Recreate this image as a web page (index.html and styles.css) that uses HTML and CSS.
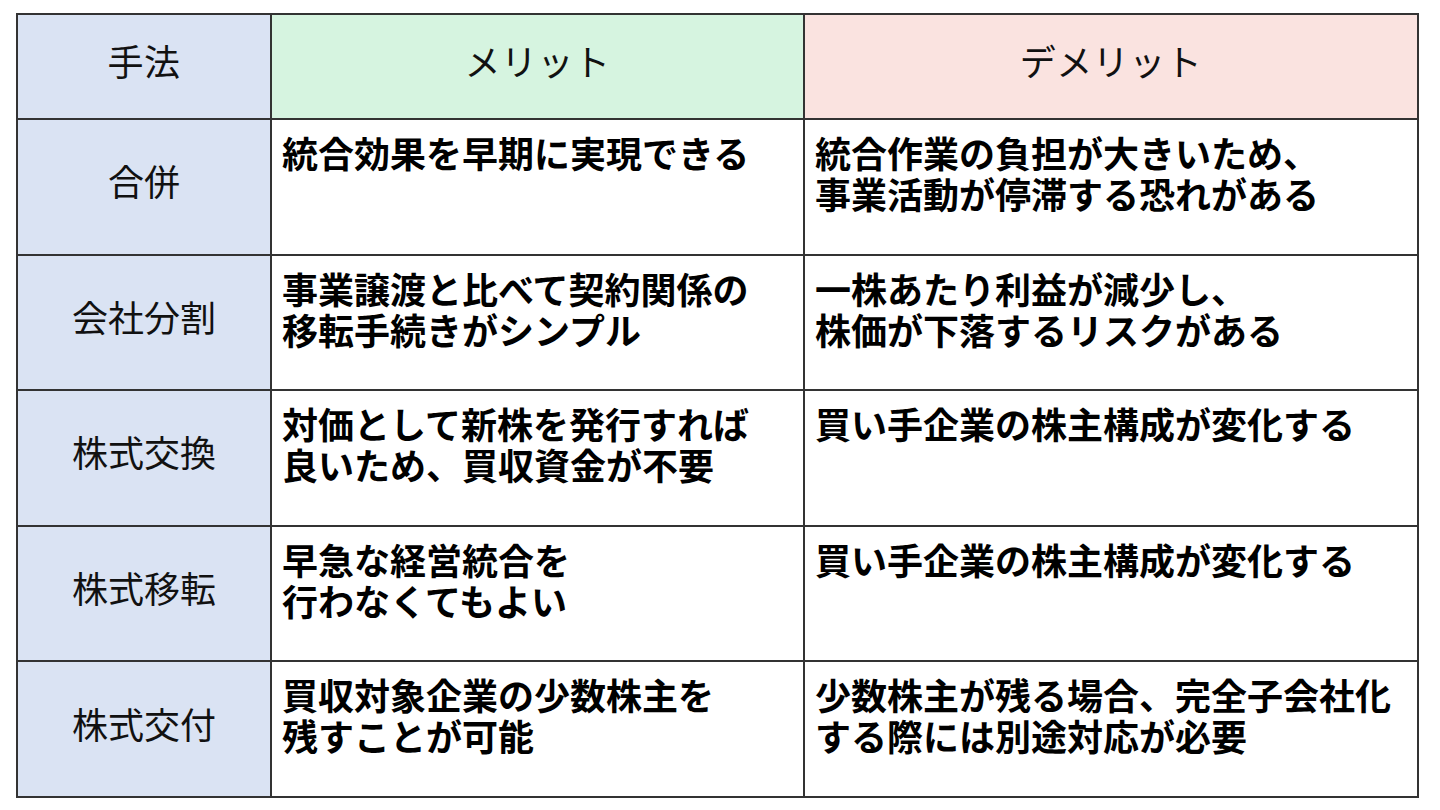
FILE: index.html
```html
<!DOCTYPE html>
<html lang="ja">
<head>
<meta charset="utf-8">
<title>手法比較</title>
<link rel="stylesheet" href="styles.css">
</head>
<body>
<div class="table">
  <div class="cell head method">手法</div>
  <div class="cell head merit">メリット</div>
  <div class="cell head demerit">デメリット</div>

  <div class="cell name">合併</div>
  <div class="cell body">統合効果を早期に実現できる</div>
  <div class="cell body">統合作業の負担が大きいため、<br>事業活動が停滞する恐れがある</div>

  <div class="cell name">会社分割</div>
  <div class="cell body">事業譲渡と比べて契約関係の<br>移転手続きがシンプル</div>
  <div class="cell body">一株あたり利益が減少し、<br>株価が下落するリスクがある</div>

  <div class="cell name">株式交換</div>
  <div class="cell body">対価として新株を発行すれば<br>良いため、買収資金が不要</div>
  <div class="cell body">買い手企業の株主構成が変化する</div>

  <div class="cell name">株式移転</div>
  <div class="cell body">早急な経営統合を<br>行わなくてもよい</div>
  <div class="cell body">買い手企業の株主構成が変化する</div>

  <div class="cell name">株式交付</div>
  <div class="cell body">買収対象企業の少数株主を<br>残すことが可能</div>
  <div class="cell body">少数株主が残る場合、完全子会社化<br>する際には別途対応が必要</div>
</div>
</body>
</html>
```

FILE: styles.css
```css
html, body {
  margin: 0;
  padding: 0;
  background: #ffffff;
}

body {
  width: 1440px;
  height: 810px;
  overflow: hidden;
  font-family: "Noto Sans CJK JP", "Noto Sans", sans-serif;
  color: #000;
}

.table {
  margin: 13px 0 0 16px;
  width: 1403px;
  box-sizing: border-box;
  padding: 2px;
  background: #333333;
  display: grid;
  grid-template-columns: 252px 531px 612px;
  grid-template-rows: 103px repeat(5, 133.6px);
  gap: 2px;
}

.cell {
  background: #ffffff;
  font-size: 36px;
  line-height: 41px;
}

.head,
.name {
  display: flex;
  align-items: center;
  justify-content: center;
  font-weight: 400;
  color: #111;
  padding-bottom: 12px;
  box-sizing: border-box;
}

.head {
  letter-spacing: 0.5px;
}

.method,
.name {
  background: #dae3f3;
}

.merit {
  background: #d6f4e0;
}

.demerit {
  background: #fae3e0;
}

.body {
  font-weight: 700;
  padding: 12px 0 0 10px;
  white-space: nowrap;
}
```
